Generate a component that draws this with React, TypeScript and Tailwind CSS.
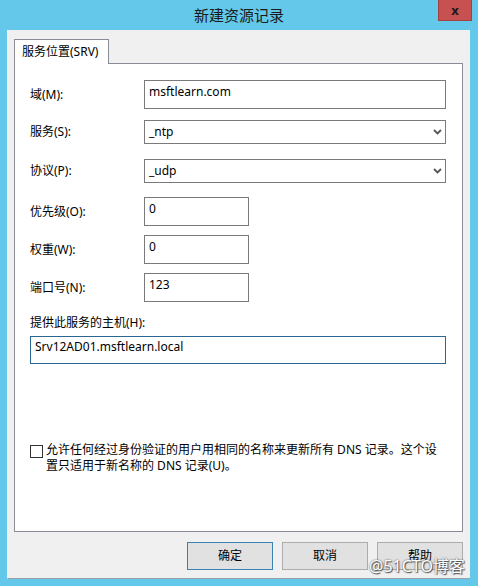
const font = "font-['Noto_Sans','Noto_Sans_CJK_SC',sans-serif]";

function Chevron() {
  return (
    <svg width="9" height="6" viewBox="0 0 9 6" className="shrink-0">
      <path d="M1 1 L4.5 4.5 L8 1" fill="none" stroke="#555" strokeWidth="1.8" />
    </svg>
  );
}

function TextBox({ value, className }: { value: string; className: string }) {
  return (
    <div
      className={`border border-[#7a7a7a] bg-white pl-[4px] pt-[3px] text-[12px] leading-[16px] text-black ${className}`}
    >
      {value}
    </div>
  );
}

function SelectBox({ value, className }: { value: string; className: string }) {
  return (
    <div
      className={`flex h-[24px] items-center justify-between border border-[#7a7a7a] bg-white pl-[4px] pr-[3px] text-[12px] text-black ${className}`}
    >
      <span>{value}</span>
      <Chevron />
    </div>
  );
}

function Row({ label, children, className }: { label: string; children: React.ReactNode; className: string }) {
  return (
    <div className={`flex items-center ${className}`}>
      <span className="w-[114px] shrink-0 text-[12px] text-black">{label}</span>
      {children}
    </div>
  );
}

function Button({ label, primary }: { label: string; primary?: boolean }) {
  return (
    <div
      className={`flex h-[28px] w-[86px] items-center justify-center border bg-[#e1e1e1] text-[12px] text-black ${
        primary ? "border-[#3c7fb1]" : "border-[#adadad]"
      }`}
    >
      {label}
    </div>
  );
}

export default function App() {
  return (
    <div className={`relative flex h-[586px] w-[478px] flex-col bg-[#63c8e9] ${font}`}>
      {/* title bar */}
      <div className="grid h-[30px] grid-cols-[1fr_auto_1fr] items-start">
        <div />
        <div className="pt-[5px] text-[15px] leading-[20px] text-[#1a1a1a]">新建资源记录</div>
        <div className="flex justify-end pr-[6px]">
          <div className="flex h-[21px] w-[34px] items-center justify-center border border-t-0 border-[#a44040] bg-[#c75050] text-[13px] font-bold leading-none text-[#1a1a1a]">
            x
          </div>
        </div>
      </div>

      {/* client area */}
      <div className="ml-[7px] mr-[8px] flex h-[549px] flex-col border-b border-[#9aa0a8] border-l border-l-[#e8f6fb] bg-[#f0f0f0] pl-[6px] pr-[7px] pt-[9px]">
        {/* tab header */}
        <div className="relative z-10 -mb-px flex">
          <div className="flex h-[25px] w-[95px] items-start border border-b-0 border-[#898c95] bg-white pl-[7px] pt-[3px] text-[12px] text-black">
            服务位置(SRV)
          </div>
        </div>

        {/* tab panel */}
        <div className="flex h-[469px] flex-col border border-[#898c95] bg-white pl-[15px] pr-[16px]">
          <Row label="域(M):" className="mt-[16px]">
            <TextBox value="msftlearn.com" className="h-[29px] flex-1" />
          </Row>
          <Row label="服务(S):" className="mt-[11px]">
            <SelectBox value="_ntp" className="flex-1" />
          </Row>
          <Row label="协议(P):" className="mt-[15px]">
            <SelectBox value="_udp" className="flex-1" />
          </Row>
          <Row label="优先级(O):" className="mt-[14px]">
            <TextBox value="0" className="h-[29px] w-[105px]" />
          </Row>
          <Row label="权重(W):" className="mt-[9px]">
            <TextBox value="0" className="h-[29px] w-[105px]" />
          </Row>
          <Row label="端口号(N):" className="mt-[9px]">
            <TextBox value="123" className="h-[29px] w-[105px]" />
          </Row>

          <div className="mt-[13px] text-[12px] leading-[16px] text-black">提供此服务的主机(H):</div>
          <div className="mt-[5px] flex h-[28px] items-center border border-[#2b6592] pl-[4px] pb-[6px] text-[12px] text-black">
            Srv12AD01.msftlearn.local
          </div>

          <div className="mt-[78px] flex items-start">
            <div className="mt-[3px] h-[13px] w-[13px] shrink-0 border border-[#333] bg-white" />
            <div className="ml-[3px] whitespace-nowrap text-[12px] leading-[16px] text-black">
              允许任何经过身份验证的用户用相同的名称来更新所有 DNS 记录。这个设
              <br />
              置只适用于新名称的 DNS 记录(U)。
            </div>
          </div>
        </div>

        {/* buttons */}
        <div className="mt-[10px] flex justify-end gap-[9px]">
          <Button label="确定" primary />
          <Button label="取消" />
          <Button label="帮助" />
        </div>
      </div>

      {/* watermark */}
      <div className="absolute left-[369px] top-[556px] text-[16px] leading-[20px] text-white [text-shadow:0_0_2px_#444,1px_1px_1px_#555]">
        @51CTO博客
      </div>
    </div>
  );
}
